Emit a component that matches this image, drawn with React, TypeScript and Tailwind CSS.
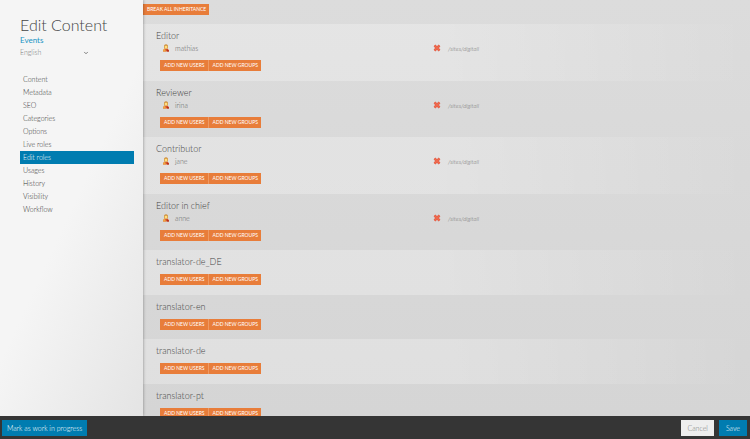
import React from 'react';
import { ChevronDown } from 'lucide-react';

interface Role {
    name: string;
    members: string[];
}

const menuItems = [
    'Content',
    'Metadata',
    'SEO',
    'Categories',
    'Options',
    'Live roles',
    'Edit roles',
    'Usages',
    'History',
    'Visibility',
    'Workflow',
];

const roles: Role[] = [
    { name: 'Editor', members: ['mathias'] },
    { name: 'Reviewer', members: ['irina'] },
    { name: 'Contributor', members: ['jane'] },
    { name: 'Editor in chief', members: ['anne'] },
    { name: 'translator-de_DE', members: [] },
    { name: 'translator-en', members: [] },
    { name: 'translator-de', members: [] },
    { name: 'translator-pt', members: [] },
];

const UserIcon = () => (
    <svg viewBox="0 0 16 16" className="w-2 h-2" aria-hidden="true">
        <path d="M2 15c0-4 2-6 6-6s6 2 6 6z" fill="#d9542b" />
        <path d="M2 15c0-4 2-5 4-6l2 6z" fill="#eda640" />
        <path d="M10 11l4 2v2h-4z" fill="#b5301c" />
        <path d="M4 5c0-6 8-6 8 0v4H4z" fill="#cd8a34" />
        <circle cx="8" cy="6" r="3" fill="#ffdf80" />
    </svg>
);

const RemoveIcon = () => (
    <svg viewBox="0 0 16 16" className="w-2 h-2" aria-hidden="true">
        <path d="M3 3l10 10M13 3L3 13" stroke="#d8604c" strokeWidth="5" />
        <path d="M3 3l10 10M13 3L3 13" stroke="#f2694c" strokeWidth="3" />
    </svg>
);

const OrangeButton = ({ children }: { children: React.ReactNode }) => (
    <button
        type="button"
        className="h-[11px] pl-1 pr-[3px] bg-[#e87d3a] text-white text-[5px] leading-[11px] font-normal uppercase whitespace-nowrap"
    >
        {children}
    </button>
);

const RoleSection = ({ role }: { role: Role }) => (
    <section className="pt-[6px] pb-[10px] pl-[13px] odd:bg-linear-to-r odd:from-white/25 odd:from-50% odd:to-transparent even:pb-[9px]">
        <h2 className="text-[9px] leading-[12px] text-[#444]">{role.name}</h2>
        {role.members.map((member) => (
            <div key={member} className="flex items-center h-3 pl-[6px] text-[#606060]">
                <span className="flex items-center w-[271px] gap-[5px] text-[7px]">
                    <UserIcon />
                    {member}
                </span>
                <button type="button" aria-label={`Remove ${member}`}>
                    <RemoveIcon />
                </button>
                <span className="pl-[7px] text-[6px] italic text-[#777]">/sites/digitall</span>
            </div>
        ))}
        <div className="flex pt-[6px] pl-1">
            <div className="flex gap-px bg-[#ee9a63]">
                <OrangeButton>Add new users</OrangeButton>
                <OrangeButton>Add new groups</OrangeButton>
            </div>
        </div>
    </section>
);

const App = () => {
    return (
        <div className="flex flex-col h-screen overflow-hidden font-[Lato,'Open_Sans',sans-serif] font-light">
            <div className="flex flex-1 min-h-0">
                <aside className="z-10 w-[143px] shrink-0 pl-5 pr-[9px] pt-[14px] bg-linear-[115deg,#f5f5f5_50%,#e4e4e4] shadow-[0_0_3px_rgba(0,0,0,0.4)]">
                    <h1 className="text-[16px] leading-[21px] text-[#444] whitespace-nowrap">Edit Content</h1>
                    <p className="text-[8px] leading-[10px] text-[#1a94c4] font-normal">Events</p>
                    <div className="relative w-[69px] mt-[2px] text-[#777]">
                        <select
                            aria-label="Language"
                            className="block w-full appearance-none bg-transparent text-[7px] leading-[11px]"
                        >
                            <option>English</option>
                        </select>
                        <ChevronDown className="absolute right-0 top-[3px] w-[6px] h-[6px] pointer-events-none text-[#555]" strokeWidth={3} />
                    </div>
                    <nav className="flex flex-col mt-[15px]">
                        {menuItems.map((item) => (
                            <a
                                key={item}
                                href="#"
                                aria-current={item === 'Edit roles' ? 'page' : undefined}
                                className="pl-[3px] text-[7px] leading-[13px] text-[#333] aria-[current=page]:bg-[#007cb0] aria-[current=page]:text-white"
                            >
                                {item}
                            </a>
                        ))}
                    </nav>
                </aside>
                <main className="flex-1 min-w-0 overflow-hidden bg-linear-to-b from-[#dcdcdc] to-[#d5d5d5]">
                    <div className="flex h-6 pt-1">
                        <OrangeButton>Break all inheritance</OrangeButton>
                    </div>
                    <div>
                        {roles.map((role) => (
                            <RoleSection key={role.name} role={role} />
                        ))}
                    </div>
                </main>
            </div>
            <footer className="z-20 flex items-center h-[23px] pl-[2px] pr-[3px] bg-[#353535] text-[7px] leading-[16px]">
                <button type="button" className="px-[5px] bg-[#007cb0] text-white">
                    Mark as work in progress
                </button>
                <button type="button" className="ml-auto px-[6px] bg-[#eee] text-[#777]">
                    Cancel
                </button>
                <button type="button" className="ml-[5px] px-[7px] bg-[#007cb0] text-white">
                    Save
                </button>
            </footer>
        </div>
    );
};

export default App;
